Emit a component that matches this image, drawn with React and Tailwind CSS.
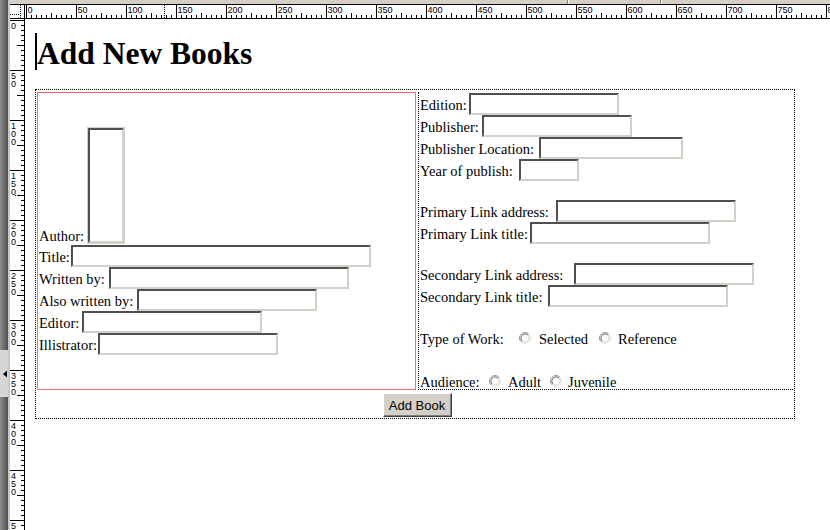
import React from "react";

const serif = "font-['Liberation_Serif','Times_New_Roman',serif] text-[14.5px] text-black";

function TopRuler() {
  const items = [];
  for (let v = 0; v <= 800; v += 5) {
    const x = v + 1.5;
    if (v % 50 === 0) {
      items.push(<line key={"l" + v} x1={x} x2={x} y1={0} y2={13} stroke="#000" strokeWidth="1" />);
      items.push(
        <text key={"t" + v} x={v + 2.5} y={7.5} fontSize="9" fontFamily="Liberation Sans, Arial, sans-serif" fill="#000">
          {v}
        </text>
      );
    } else if (v % 25 === 0) {
      items.push(<line key={"l" + v} x1={x} x2={x} y1={8} y2={13} stroke="#000" strokeWidth="1" />);
    } else {
      items.push(<line key={"l" + v} x1={x} x2={x} y1={10} y2={13} stroke="#000" strokeWidth="1" />);
    }
  }
  return (
    <svg width="805" height="13" className="block shrink-0">
      {items}
      <line x1={139.5} x2={139.5} y1={0} y2={13} stroke="#000" strokeDasharray="1 1" />
    </svg>
  );
}

function SideRuler() {
  const items = [];
  for (let v = 0; v <= 510; v += 5) {
    const y = v + 1.5;
    if (v % 50 === 0) {
      items.push(<line key={"l" + v} x1={0} x2={14} y1={y} y2={y} stroke="#000" strokeWidth="1" />);
      items.push(
        <text key={"t" + v} fontSize="9" fontFamily="Liberation Sans, Arial, sans-serif" fill="#000">
          {String(v)
            .split("")
            .map((d, k) => (
              <tspan key={k} x={1} y={v + 10 + 8 * k}>
                {d}
              </tspan>
            ))}
        </text>
      );
    } else if (v % 25 === 0) {
      items.push(<line key={"l" + v} x1={7} x2={14} y1={y} y2={y} stroke="#000" strokeWidth="1" />);
    } else {
      items.push(<line key={"l" + v} x1={11} x2={14} y1={y} y2={y} stroke="#000" strokeWidth="1" />);
    }
  }
  return (
    <svg width="14" height="511" className="block shrink-0">
      {items}
      <line x1={5} x2={14} y1={176.5} y2={176.5} stroke="#000" strokeDasharray="1 1" />
    </svg>
  );
}

function Corner() {
  return (
    <svg width="14" height="13" className="block">
      <line x1={10.5} x2={10.5} y1={0} y2={13} stroke="#000" strokeDasharray="1 1" />
      <line x1={0} x2={10} y1={9.5} y2={9.5} stroke="#000" strokeDasharray="1 1" />
    </svg>
  );
}

function Radio() {
  return (
    <svg width="12" height="12" viewBox="0 0 12 12" className="block shrink-0 mt-[6px]">
      <circle cx="6" cy="6" r="5.5" fill="#fff" />
      <path d="M2.1 9.9 A5.5 5.5 0 0 1 9.9 2.1" stroke="#9a9a9a" strokeWidth="1" fill="none" />
      <path d="M2.9 9.1 A4.4 4.4 0 0 1 9.1 2.9" stroke="#6a6a6a" strokeWidth="1" fill="none" />
      <path d="M9.9 2.1 A5.5 5.5 0 0 1 2.1 9.9" stroke="#e4e2dc" strokeWidth="1" fill="none" />
      <path d="M9.1 2.9 A4.4 4.4 0 0 1 2.9 9.1" stroke="#d4d0c8" strokeWidth="1" fill="none" />
    </svg>
  );
}

const inputCls =
  "h-[22px] shrink-0 bg-white p-0 outline-none border-2 border-t-[#505050] border-l-[#505050] border-r-[#d4d0c8] border-b-[#d4d0c8]";

function Field({ label, lw, iw }) {
  return (
    <div className="flex h-[22px] shrink-0">
      <span className={`${lw} shrink-0 whitespace-nowrap leading-[22px] pt-[1px]`}>{label}</span>
      <input type="text" className={`${inputCls} ${iw}`} />
    </div>
  );
}

function Blank({ h }) {
  return <div className={`${h} shrink-0`} />;
}

export default function App() {
  return (
    <div className="w-[830px] h-[530px] flex overflow-hidden bg-white">
      {/* left dark strip */}
      <div className="w-[8px] h-full flex flex-col shrink-0">
        <div className="h-[350px] bg-linear-to-r from-[#8e8e8e] to-[#4e4e4e]" />
        <div className="h-[47px] bg-[#d6d6d6] flex flex-col">
          <svg width="8" height="47" className="block">
            <polygon points="3,24 7,20.5 7,27.5" fill="#000" />
          </svg>
        </div>
        <div className="flex-1 bg-linear-to-r from-[#8e8e8e] to-[#4e4e4e]" />
      </div>
      <div className="w-[2px] h-full bg-[#c8c8c8] shrink-0" />

      {/* main */}
      <div className="flex-1 flex flex-col">
        <div className="h-[4px] bg-[#d4d0c8] flex shrink-0">
          <div className="w-[557px]" />
          <div className="w-[1px] bg-[#808080]" />
          <div className="w-[1px] bg-white" />
          <div className="w-[91px]" />
          <div className="w-[1px] bg-[#808080]" />
          <div className="w-[1px] bg-white" />
          <div className="flex-1" />
        </div>
        <div className="h-[14px] flex border-t border-black bg-white shrink-0">
          <div className="w-[15px] border-r border-black shrink-0">
            <Corner />
          </div>
          <TopRuler />
        </div>
        <div className="flex flex-1 border-t border-black">
          <div className="w-[15px] border-r border-black bg-white shrink-0">
            <SideRuler />
          </div>

          {/* page content */}
          <div className={`flex-1 bg-white pl-[10px] pt-[16px] ${serif}`}>
            <div className="flex items-start h-[37px]">
              <div className="w-[2px] h-[37px] -mt-[2px] bg-black shrink-0" />
              <h1 className="font-['Liberation_Serif','Times_New_Roman',serif] text-[31.5px] font-bold leading-[37px] text-black whitespace-nowrap">
                Add New Books
              </h1>
            </div>

            <div className="mt-[17px] w-[760px] border border-dotted border-black px-[1px] pt-[2px] flex flex-col">
              <div className="flex h-[298px] gap-[2px]">
                {/* left cell */}
                <div className="w-[379px] shrink-0 border border-[#f07070] pl-[1px] flex flex-col justify-center">
                  <div className="flex items-end h-[118px] shrink-0">
                    <span className="w-[48px] shrink-0 h-[22px] leading-[22px] pt-[2px] whitespace-nowrap">Author:</span>
                    <div className="self-start w-[38px] h-[117px] border border-[#d4d0c8] shrink-0">
                      <textarea className="block w-full h-full resize-none overflow-hidden bg-white p-0 outline-none border-2 border-t-[#505050] border-l-[#505050] border-r-[#d4d0c8] border-b-[#d4d0c8]" />
                    </div>
                  </div>
                  <Field label="Title:" lw="w-[32px]" iw="w-[300px]" />
                  <Field label="Written by:" lw="w-[70px]" iw="w-[240px]" />
                  <Field label="Also written by:" lw="w-[98px]" iw="w-[180px]" />
                  <Field label="Editor:" lw="w-[43px]" iw="w-[180px]" />
                  <Field label="Illistrator:" lw="w-[59px]" iw="w-[180px]" />
                </div>

                {/* right cell */}
                <div className="flex-1 border-l border-b border-dotted border-black pl-[1px] pt-[1px] flex flex-col">
                  <Field label="Edition:" lw="w-[49px]" iw="w-[150px]" />
                  <Field label="Publisher:" lw="w-[62px]" iw="w-[150px]" />
                  <Field label="Publisher Location:" lw="w-[119px]" iw="w-[144px]" />
                  <Field label="Year of publish:" lw="w-[99px]" iw="w-[60px]" />
                  <Blank h="h-[19px]" />
                  <Field label="Primary Link address:" lw="w-[136px]" iw="w-[180px]" />
                  <Field label="Primary Link title:" lw="w-[110px]" iw="w-[180px]" />
                  <Blank h="h-[19px]" />
                  <Field label="Secondary Link address:" lw="w-[154px]" iw="w-[180px]" />
                  <Field label="Secondary Link title:" lw="w-[128px]" iw="w-[180px]" />
                  <Blank h="h-[19px]" />
                  <div className="flex h-[22px] shrink-0">
                    <span className="w-[99px] shrink-0 whitespace-nowrap leading-[22px] pt-[2px]">Type of Work:</span>
                    <Radio />
                    <span className="ml-[8px] w-[60px] shrink-0 whitespace-nowrap leading-[22px] pt-[2px]">Selected</span>
                    <Radio />
                    <span className="ml-[7px] whitespace-nowrap leading-[22px] pt-[2px]">Reference</span>
                  </div>
                  <Blank h="h-[21px]" />
                  <div className="flex h-[19px] shrink-0">
                    <span className="w-[69px] shrink-0 whitespace-nowrap leading-[22px] pt-[2px]">Audience:</span>
                    <Radio />
                    <span className="ml-[7px] w-[42px] shrink-0 whitespace-nowrap leading-[22px] pt-[2px]">Adult</span>
                    <Radio />
                    <span className="ml-[6px] whitespace-nowrap leading-[22px] pt-[2px]">Juvenile</span>
                  </div>
                </div>
              </div>

              {/* button row */}
              <div className="h-[28px] flex justify-center items-start pt-[3px]">
                <button className="ml-[4px] h-[24px] w-[69px] bg-[#d4d0c8] p-0 border border-t-white border-l-white border-r-[#404040] border-b-[#404040] shadow-[inset_-1px_-1px_0_#808080] font-['Liberation_Sans',Arial,sans-serif] text-[13px] leading-none text-black">
                  Add Book
                </button>
              </div>
            </div>
          </div>
        </div>
      </div>
    </div>
  );
}
